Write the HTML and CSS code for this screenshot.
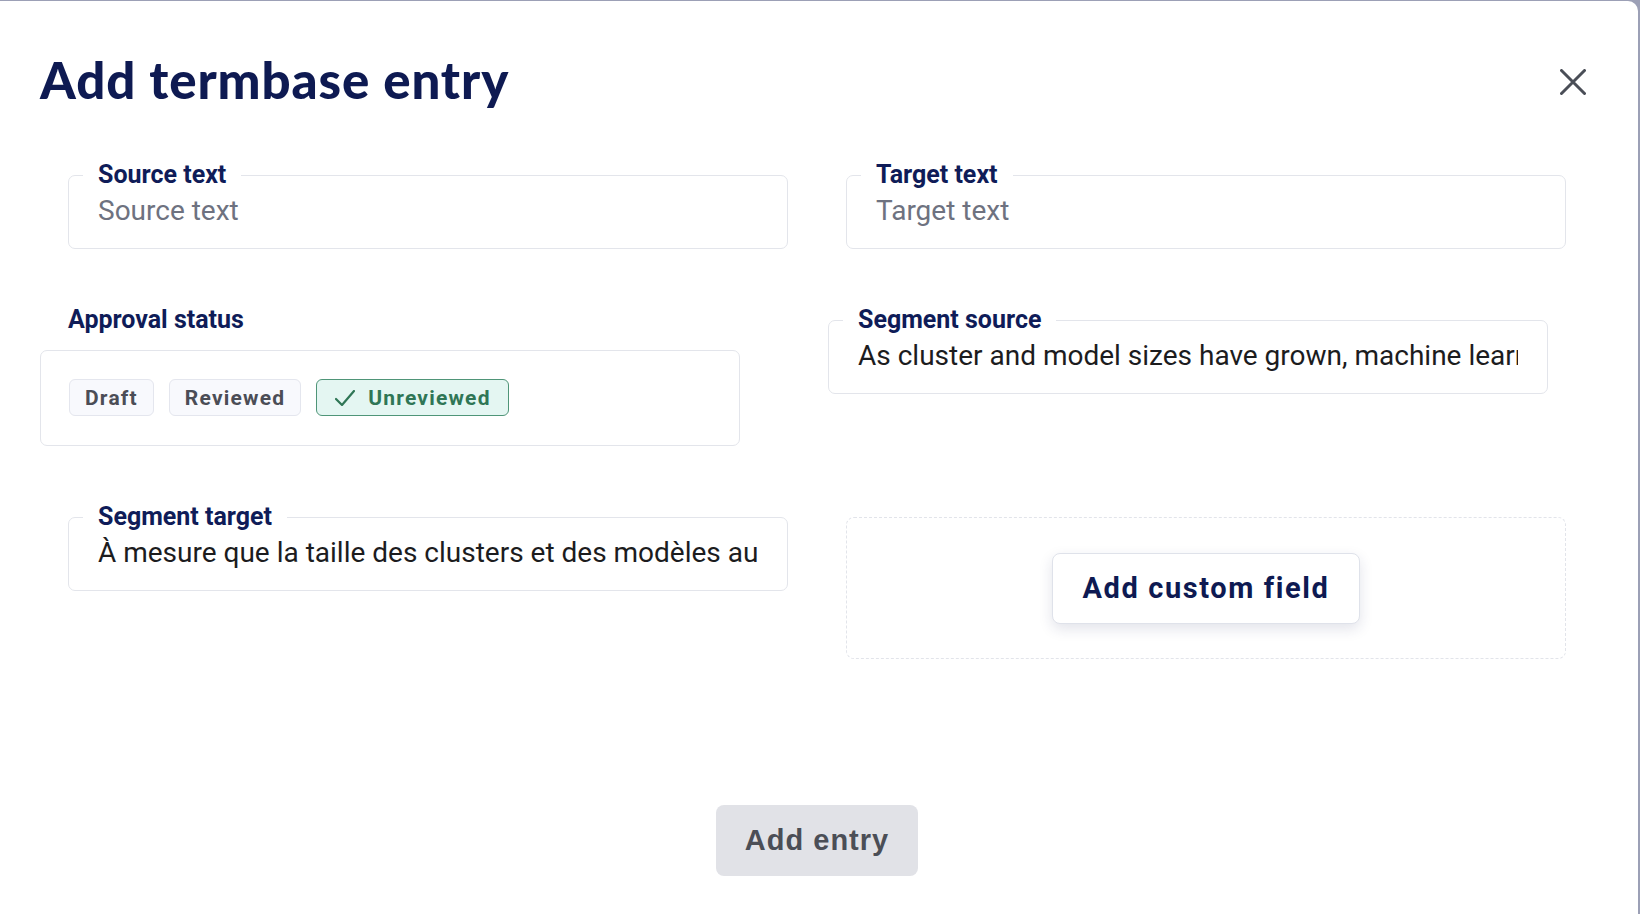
FILE: index.html
```html
<!DOCTYPE html>
<html lang="en">
<head>
<meta charset="utf-8">
<title>Add termbase entry</title>
<link rel="stylesheet" href="styles.css">
</head>
<body>
<div class="modal">
  <button class="close" type="button" aria-label="Close">
    <svg width="26" height="26" viewBox="0 0 26 26"><path d="M1.5 1.5 L24.5 24.5 M24.5 1.5 L1.5 24.5" fill="none" stroke="#4a4e57" stroke-width="3" stroke-linecap="round"/></svg>
  </button>
  <h1 class="title">Add termbase entry</h1>
  <div class="form-grid">
    <fieldset class="field inset">
      <legend>Source text</legend>
      <input type="text" placeholder="Source text">
    </fieldset>
    <fieldset class="field inset">
      <legend>Target text</legend>
      <input type="text" placeholder="Target text">
    </fieldset>
    <div class="approval">
      <div class="approval-label">Approval status</div>
      <div class="approval-box">
        <span class="chip">Draft</span>
        <span class="chip">Reviewed</span>
        <span class="chip chip-on"><svg width="20" height="16" viewBox="0 0 20 16"><path d="M1 9 L7 15 L19 1" fill="none" stroke="#2f7656" stroke-width="2.2" stroke-linecap="round" stroke-linejoin="round"/></svg>Unreviewed</span>
      </div>
    </div>
    <fieldset class="field shift">
      <legend>Segment source</legend>
      <input type="text" class="value" value="As cluster and model sizes have grown, machine learning models have become harder to train efficiently.">
    </fieldset>
    <fieldset class="field inset">
      <legend>Segment target</legend>
      <input type="text" class="value" value="À mesure que la taille des clusters et des modèles augmente, les modèles sont devenus plus difficiles à entraîner.">
    </fieldset>
    <div class="custom-area">
      <button class="custom-btn" type="button">Add custom field</button>
    </div>
  </div>
  <div class="footer">
    <button class="primary" type="button">Add entry</button>
  </div>
</div>
</body>
</html>
```

FILE: styles.css
```css
html, body {
  margin: 0;
  padding: 0;
}
body {
  background: #9ca0b6;
  width: 1640px;
  height: 914px;
  overflow: hidden;
  font-family: Roboto, "Liberation Sans", sans-serif;
}
.modal {
  position: relative;
  margin-top: 1px;
  margin-right: 2px;
  height: 913px;
  background: #ffffff;
  border-top-right-radius: 10px;
}
.close {
  position: absolute;
  left: 1560px;
  top: 68px;
  width: 26px;
  height: 26px;
  padding: 0;
  border: 0;
  background: none;
  cursor: pointer;
}
.close svg {
  display: block;
}
.title {
  margin: 0;
  padding: 49px 0 0 40px;
  font-family: Lato, "Liberation Sans", sans-serif;
  font-weight: 900;
  font-size: 51px;
  line-height: 60px;
  color: #0e1a52;
  letter-spacing: 0.9px;
}
.form-grid {
  display: grid;
  grid-template-columns: 750px 750px;
  column-gap: 28px;
  row-gap: 59px;
  align-items: start;
  margin-top: 53px;
  padding-left: 40px;
}
.field {
  box-sizing: border-box;
  width: 720px;
  margin: 0;
  padding: 8px 29px 21px 29px;
  border: 1px solid #e3e5eb;
  border-radius: 7px;
  min-width: 0;
}
.field.inset {
  margin-left: 28px;
}
.field.shift {
  margin-left: 10px;
}
.field legend {
  margin-left: -15px;
  padding: 0 15px;
  font-weight: 700;
  font-size: 25px;
  line-height: 24px;
  color: #0f1c58;
}
.field input {
  display: block;
  box-sizing: border-box;
  width: 100%;
  height: 32px;
  margin: 0;
  padding: 0;
  border: 0;
  outline: none;
  background: transparent;
  font-family: Roboto, "Liberation Sans", sans-serif;
  font-size: 28px;
  line-height: 32px;
  color: #1c1c1e;
}
.field input::placeholder {
  color: #6e7280;
  opacity: 1;
}
.approval-label {
  padding-left: 28px;
  font-weight: 700;
  font-size: 25px;
  line-height: 24px;
  color: #0f1c58;
}
.approval-box {
  box-sizing: border-box;
  width: 700px;
  height: 96px;
  margin-top: 18px;
  padding: 28px 28px;
  border: 1px solid #e3e5eb;
  border-radius: 7px;
  display: flex;
  align-items: flex-start;
  gap: 15px;
}
.chip {
  box-sizing: border-box;
  height: 37px;
  display: inline-flex;
  align-items: center;
  padding: 0 15px;
  border: 1px solid #e4e6ee;
  border-radius: 6px;
  background: #f8f9fd;
  font-weight: 700;
  font-size: 21px;
  letter-spacing: 1.2px;
  color: #4b4d56;
}
.chip-on {
  padding-left: 18px;
  padding-right: 17px;
  gap: 13px;
  background: #e4f6f2;
  border-color: #4f9578;
  color: #2f7656;
}
.chip-on svg {
  display: block;
}
.custom-area {
  box-sizing: border-box;
  width: 720px;
  height: 142px;
  margin-left: 28px;
  margin-top: 12px;
  border: 1px dashed #e2e4ea;
  border-radius: 8px;
  display: flex;
  align-items: center;
  justify-content: center;
}
.custom-btn {
  box-sizing: border-box;
  height: 71px;
  padding: 0 29px;
  background: #ffffff;
  border: 1px solid #dfe2ea;
  border-radius: 8px;
  box-shadow: 0 5px 14px rgba(30, 40, 90, 0.13);
  font-family: Roboto, "Liberation Sans", sans-serif;
  font-weight: 700;
  font-size: 29px;
  letter-spacing: 1.6px;
  color: #0e1a52;
  cursor: pointer;
}
.footer {
  display: flex;
  justify-content: center;
  margin-top: 146px;
  padding-right: 4px;
}
.primary {
  box-sizing: border-box;
  width: 202px;
  height: 71px;
  padding: 0;
  border: 0;
  border-radius: 8px;
  background: #e1e2e7;
  font-family: "Liberation Sans", Arial, sans-serif;
  font-weight: 700;
  font-size: 29px;
  letter-spacing: 1px;
  color: #4b4e56;
  cursor: pointer;
}
```
